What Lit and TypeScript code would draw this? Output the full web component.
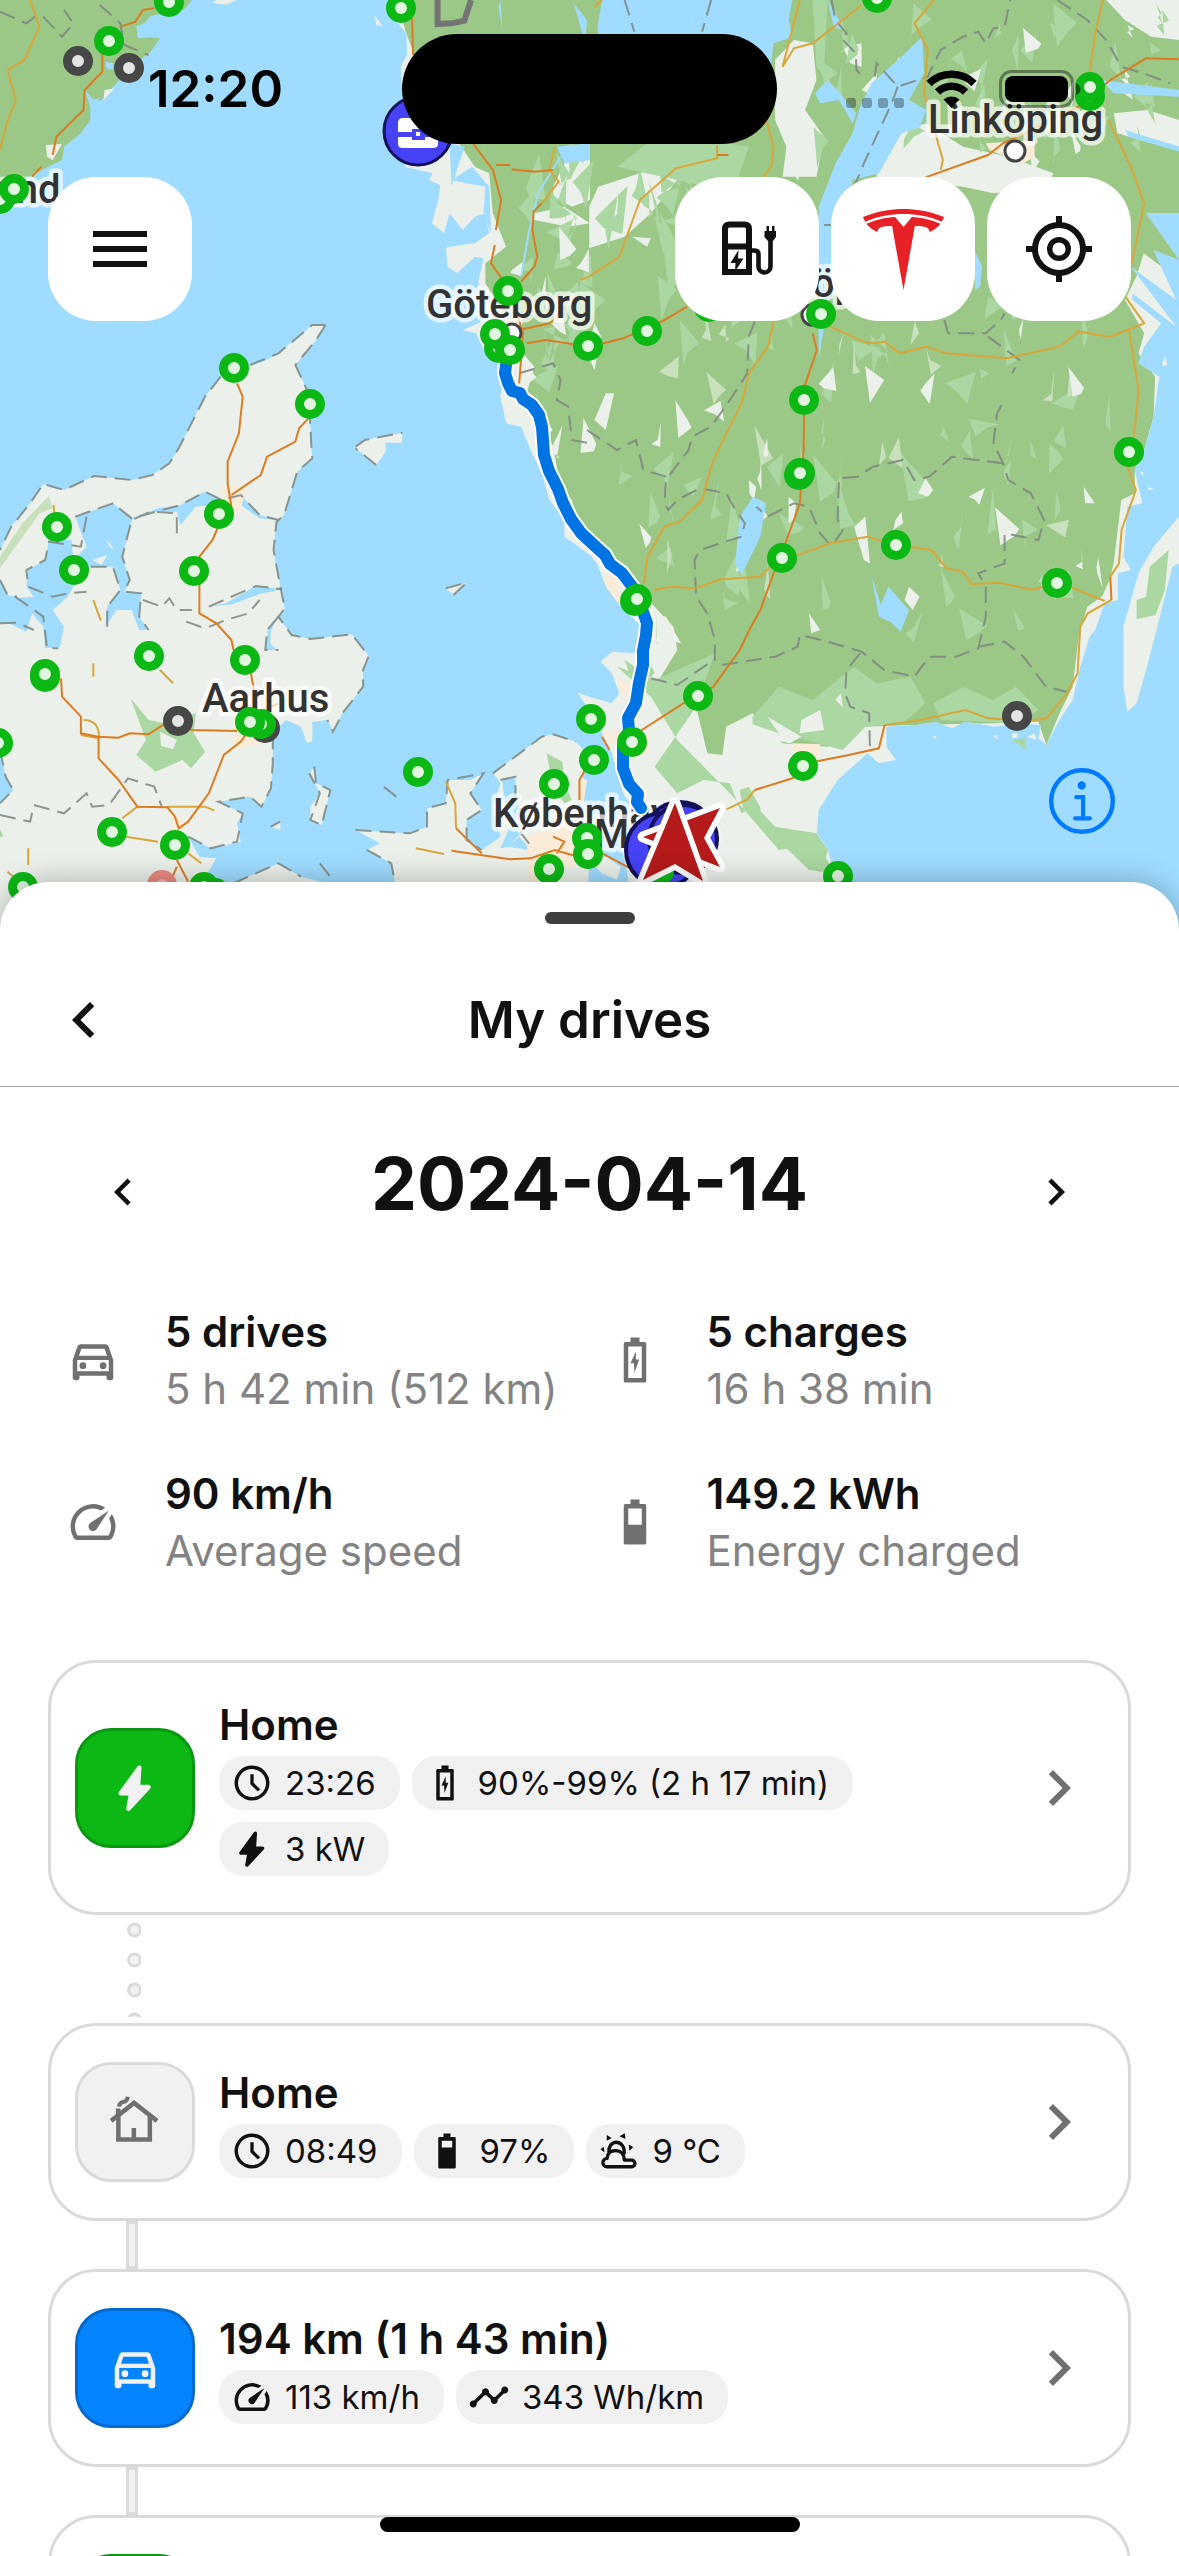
import { LitElement, html, css, svg, nothing } from "lit";
import type { SVGTemplateResult, TemplateResult } from "lit";
import { customElement } from "lit/decorators.js";
import { classMap } from "lit/directives/class-map.js";

/* ---------- icons (24 unit grid) ---------- */

const cell = "M10 2h4v2h2.3a.7.7 0 0 1 .7.7v16.6a.7.7 0 0 1-.7.7H7.7a.7.7 0 0 1-.7-.7V4.7a.7.7 0 0 1 .7-.7H10z";

const icons: Record<string, SVGTemplateResult> = {
  menu: svg`<path d="M3 6h18v2H3zM3 11h18v2H3zM3 16h18v2H3z"/>`,
  back: svg`<path d="M15.41 7.41 14 6l-6 6 6 6 1.41-1.41L10.83 12z"/>`,
  next: svg`<path d="M10 6 8.59 7.41 13.17 12l-4.58 4.59L10 18l6-6z"/>`,
  car: svg`<path fill-rule="evenodd" d="M18.92 6.01C18.72 5.42 18.16 5 17.5 5h-11c-.66 0-1.21.42-1.42 1.01L3 12v8c0 .55.45 1 1 1h1c.55 0 1-.45 1-1v-1h12v1c0 .55.45 1 1 1h1c.55 0 1-.45 1-1v-8zM6.85 7h10.29l1.08 3.11H5.77zM19 17H5v-5h14z"/><circle cx="7.5" cy="14.5" r="1.5"/><circle cx="16.5" cy="14.5" r="1.5"/>`,
  speed: svg`<path d="m20.38 8.57-1.23 1.85a8 8 0 0 1-.22 7.58H5.07A8 8 0 0 1 15.58 6.85l1.85-1.23A10 10 0 0 0 3.35 19a2 2 0 0 0 1.72 1h13.85a2 2 0 0 0 1.74-1 10 10 0 0 0-.27-10.44zm-9.79 6.84a2 2 0 0 0 2.83 0l5.66-8.49-8.49 5.66a2 2 0 0 0 0 2.83z"/>`,
  charging: svg`<path fill-rule="evenodd" d="${cell}M9 6v14h6V6z"/><path d="M12.4 8.2 10 13.4h1.5l.2 4.3 2.2-5.9h-1.5z"/>`,
  half: svg`<path fill-rule="evenodd" d="${cell}M9 6v7.2h6V6z"/>`,
  full: svg`<path fill-rule="evenodd" d="${cell}M9 6.2V10h6V6.2z"/>`,
  clock: svg`<path fill-rule="evenodd" d="M12 2a10 10 0 1 0 0 20 10 10 0 0 0 0-20zm0 18a8 8 0 1 1 0-16 8 8 0 0 1 0 16z"/><path fill="none" stroke="currentColor" stroke-width="1.9" d="M12 7v5.3l4 3.9"/>`,
  bolt: svg`<path stroke="currentColor" stroke-width="2" stroke-linejoin="round" d="m13.9 3-8.2 11.3h4.6L9.1 21.2 18 11.6h-4.7z"/>`,
  house: svg`<path fill="none" stroke="currentColor" stroke-width="2" d="m1.4 11.5 10.2-8 10.2 8M4.6 9.6v10.2h14V9.6M11.5 14.7v5M4.5 6v5"/><path fill="none" stroke="currentColor" stroke-width="1.8" d="M4.9 5.2c.1-1.5 1-2 2.2-2.2 1-.2 1.5-.8 1.7-2.2"/>`,
  weather: svg`<path fill="none" stroke="currentColor" stroke-width="1.9" stroke-linejoin="round" d="M5.2 21a2.4 2.4 0 0 1 0-4.8c.2-3.2 2.4-4.4 4.8-4.4 3 0 5 2.2 5 5.4h4.2a1.9 1.9 0 0 1 0 3.8zM6.4 13.5C5.6 9.5 8 7 10.5 7s5.2 2.6 4.3 7"/><path d="M5 2.8v3.4l2.8-1.7zM12.3 3.6l3-1.8.4 3.4zM17.5 8.2l2.6 1.7-2.2 2zM3.3 9.5l.4 3.4L1.4 11z"/>`,
  trend: svg`<path d="M23 8c0 1.1-.9 2-2 2-.18 0-.35-.02-.51-.07l-3.56 3.55c.05.16.07.34.07.52 0 1.1-.9 2-2 2s-2-.9-2-2c0-.18.02-.36.07-.52l-2.55-2.55c-.16.05-.34.07-.52.07s-.36-.02-.52-.07l-4.55 4.56c.05.16.07.33.07.51 0 1.1-.9 2-2 2s-2-.9-2-2 .9-2 2-2c.18 0 .35.02.51.07l4.56-4.55C8.02 9.36 8 9.18 8 9c0-1.1.9-2 2-2s2 .9 2 2c0 .18-.02.36-.07.52l2.55 2.55c.16-.05.34-.07.52-.07s.36.02.52.07l3.55-3.56C19.02 8.35 19 8.18 19 8c0-1.1.9-2 2-2s2 .9 2 2z"/>`,
  locate: svg`<circle cx="12" cy="12" r="8" fill="none" stroke="currentColor" stroke-width="2"/><circle cx="12" cy="12" r="3.1" fill="none" stroke="currentColor" stroke-width="1.8"/><path d="M11 1h2v3h-2zM11 20h2v3h-2zM1 11h3v2H1zM20 11h3v2h-3z"/>`,
  charger: svg`<g transform="scale(.3333)"><path fill="none" stroke="currentColor" stroke-width="6" d="M14 59V16q0-4.5 4.5-4.5h15q4.5 0 4.500 4.500v43zM14 33.500h24"/><path d="M27.500 37 19.500 50h5l-.5 8.500 8.500-13H27z"/><path fill="none" stroke="currentColor" stroke-width="4.6" d="M40 37.500h3.500q4 0 4 4v12a6 6 0 0 0 12 0V26"/><path d="M54 18h1.500v-5h2.500v5h3v-5h2.500v5H65v6l-3 4h-5l-3.500-4v-6z"/></g>`,
  tesla: svg`<path fill="#e82127" d="m12 5.362 2.475-3.026s4.245.09 8.471 2.054c-1.082 1.636-3.231 2.438-3.231 2.438-.146-1.439-1.154-1.79-4.354-1.79L12 24 8.619 5.034c-3.18 0-4.188.354-4.335 1.792 0 0-2.146-.795-3.229-2.43C5.28 2.431 9.525 2.34 9.525 2.34zM12 1.463c3.415-.03 7.326.528 11.328 2.28.535-.968.672-1.395.672-1.395C19.625.612 15.528.015 12 0 8.472.015 4.375.61 0 2.349c0 0 .195.525.672 1.396C4.674 1.989 8.585 1.435 12 1.46z"/>`,
  info: svg`<circle cx="12" cy="12" r="11.2" fill="none" stroke="currentColor" stroke-width="1.6"/><circle cx="11.9" cy="6.3" r="1.5"/><path fill="none" stroke="currentColor" stroke-width="1.5" stroke-linecap="round" d="M9.9 10.6h2.5v7.6M9.5 18.3h5.400"/>`,
};

const icon = (name: string, size = "") =>
  html`<svg class="icon ${size}" viewBox="0 0 24 24" aria-hidden="true">${icons[name]}</svg>`;

/* ---------- map data ---------- */

const green: [number, number][] = [
  [169, 2], [109, 41], [0, 199], [14, 189], [401, 8], [234, 368], [310, 404], [499, 348],
  [495, 334], [510, 350], [588, 346], [877, -2], [1090, 96], [1090, 87], [647, 331], [709, 307],
  [821, 314], [804, 400], [1129, 452], [57, 527], [74, 570], [219, 514], [194, 571], [149, 656],
  [245, 660], [45, 677], [45, 674], [261, 724], [250, 722], [-2, 743], [112, 832], [175, 845],
  [418, 772], [23, 887], [215, 893], [204, 887], [591, 719], [594, 760], [554, 784], [587, 838],
  [588, 854], [549, 869], [799, 475], [800, 473], [782, 558], [896, 545], [1057, 583],
  [635, 601], [637, 599], [698, 696], [632, 742], [803, 766], [838, 876], [508, 291],
];
const grey: [number, number][] = [[78, 61], [129, 68], [265, 728], [178, 721], [1017, 716]];

const labels: [number, number, string][] = [
  [-164, 203, "Kristiansand"],
  [426, 318, "Göteborg"],
  [928, 133, "Linköping"],
  [724, 297, "Jönköping"],
  [202, 712, "Aarhus"],
  [493, 827, "København"],
  [594, 848, "Malmö"],
];

const ring = ([x, y]: [number, number], stroke: string, fill: string) =>
  svg`<circle cx=${x} cy=${y} r="10.5" fill=${fill} stroke=${stroke} stroke-width="9"/>`;

// Small woodland and clearing fragments scattered over the Swedish inland.
const shards = (seed: number, count: number, x0: number, y0: number, w: number, h: number, size = 1) => {
  let s = seed;
  const next = () => ((s = (s * 16807) % 2147483647) / 2147483647);
  const near = (span: number) => Math.round((next() - 0.5) * span * size);
  for (let i = 0; i < 8; i++) next();
  let d = "";
  for (let i = 0; i < count; i++) {
    const x = Math.round(x0 + next() * w);
    const y = Math.round(y0 + next() * h);
    const tall = Math.round((40 + next() * 80) * size);
    d += `M${x} ${y}l${near(40)} ${tall}l${near(70)} ${-Math.round(tall * next() * 0.5)}l${near(60)} ${-Math.round(tall * 0.2)}z`;
  }
  return d;
};

const sweden =
  "M1040 0 1050 60 1080 100 1082 165 1065 200 1068 260 1110 400 1075 500 1150 520 1140 540 1170 555 1165 600 1148 670 1180 700 1195 640 1230 690 1262 650 1290 640 1300 700 1262 730 1185 742 1190 800 1215 820 1262 770 1285 775 1272 840 1270 900 1290 960 1230 990 1265 1000 1290 1060 1330 1060 1340 1130 1330 1190 1345 1270 1385 1280 1410 1350 1440 1420 1460 1500 1500 1560 1500 1610 1568 1665 1586 1690 1611 1760 1646 1815 1706 1880 1696 1960 1626 1955 1596 1985 1626 2020 1646 2080 1626 2110 1566 2090 1536 2078 1560 2120 1596 2190 1626 2260 1656 2380 1686 2430 1646 2520 1666 2610 1690 2790 2240 2790 2226 2670 2201 2550 2171 2500 2176 2430 2226 2340 2306 2260 2336 2290 2381 2280 2356 2240 2356 2180 2436 2175 2486 2165 2530 2185 2566 2165 2646 2180 2700 2170 2766 2175 2760 2215 2781 2235 2816 2160 2851 2100 2871 2000 2896 1910 2911 1890 2936 1810 2971 1800 2971 1720 3006 1710 2986 1670 2996 1520 3036 1510 3016 1410 3041 1350 3066 1250 3081 1130 3026 1090 3041 1040 3086 970 3010 900 3010 880 3126 980 3006 800 3126 900 3066 750 3134 780 3046 640 3134 640V0z";

const forest =
  "M1055 0 1078 95 1100 160 1220 430 1262 500 1300 520 1310 640 1345 740 1290 790 1290 850 1350 960 1390 1060 1420 1100 1400 1180 1440 1260 1470 1340 1490 1460 1520 1500 1540 1580 1568 1640 1600 1650 1690 1750 1740 1820 1790 1880 1800 1950 1740 2060 1850 2120 1880 2260 1920 2265 1930 2180 2000 2140 2080 2230 2200 2240 2290 2180 2430 2175 2640 2170 2760 2165 2781 2235 2816 2140 2851 2060 2868 1900 2890 1820 2940 1780 2960 1690 2980 1500 3016 1480 3016 1410 3041 1350 3066 1250 3070 1130 3026 1060 3041 1000 2990 900 3020 830 3040 760 3134 840V0z";

const coastDk =
  "M865 975 830 975 740 1060 700 1085 665 1095 590 1125 545 1190 475 1345 450 1390 405 1425 350 1440 250 1428 170 1470 115 1452 80 1510 30 1580 0 1650 0 1740 20 1785 45 1790 85 1840 70 1895 20 1868 0 1870 0 2250 15 2330 35 2370 0 2410V2790H540V2640L575 2575 530 2570 500 2510 560 2545 640 2525 630 2470 645 2440 580 2405 665 2390 695 2420 720 2365 725 2290 725 2200 760 2160 800 2180 815 2230 830 2210 830 2165 870 2160 885 2195 910 2140 965 2060 965 2010 980 1968 935 1903 825 1917 775 1905 740 1850 757 1825 745 1760 727 1650 735 1565 755 1545 790 1415 830 1375 828 1345 820 1180 785 1095 840 1020z";

const route =
  "M506 365l-1 8 3 10 4 8 8 2 3 6 9 6 7 10 3 12 2 28 5 16 9 18 5 14 8 16 10 14 14 13 10 9 5 9 12 9 12 16 6 12 2 8 5 14-1 12-3 16 0 14-4 18-3 20-8 15 1 12-6 16v22l6 16 9 10-1 8 4 6";

@customElement("drive-map")
export class DriveMap extends LitElement {
  static styles = css`
    :host { display: block; overflow: hidden; background: #a0dcff; }
    .canvas { display: block; width: 100%; height: 100%; }
    .terrain path { vector-effect: non-scaling-stroke; }
    .city {
      font: 500 40px Roboto, "Liberation Sans", sans-serif;
      fill: #333;
      stroke: rgba(255, 255, 255, 0.7);
      stroke-width: 9px;
      stroke-linejoin: round;
      paint-order: stroke;
    }
    .main { fill: none; stroke: #dc7c22; stroke-width: 2px; }
    .minor { fill: none; stroke: #d9a63a; stroke-width: 2px; }
    .border { fill: none; stroke: #7d8780; stroke-width: 2px; stroke-dasharray: 16 8; opacity: 0.85; }
    .land { fill: #ebf0ea; }
    .wood { fill: #9bc787; }
    .grove { fill: #abd7a2; }
    .pale { fill: #c8e0bc; }
    .water { fill: #a0dcff; }
    .urban { fill: #faecd8; }
  `;

  render() {
    return html`<svg class="canvas" viewBox="0 0 1179 930" preserveAspectRatio="xMidYMin slice" role="img" aria-label="Map of southern Sweden and Denmark">
      <defs><clipPath id="inland"><path d=${sweden} /></clipPath></defs>
      <g class="terrain" transform="scale(.37625 .33333)">
        ${this.land()} ${this.roads()}
      </g>
      ${this.overlay()}
    </svg>`;
  }

  private land() {
    return svg`
      <path class="land" d=${sweden}/>
      <path class="wood" d="M0 0H510L490 28 455 35 400 48 385 68 362 80 368 115 400 112 425 115 400 155 345 205 270 300 240 305 240 360 215 400 170 440 165 480 120 505 80 530 40 545 0 560z"/>
      <path class="land" d="M565 8 600 14 630 0H575zM278 270 305 265 275 300zM122 435 165 432 140 480 125 470zM995 45 1018 80 1000 75z"/>
      <path class="water" d="M365 75 385 95 420 70 440 65 395 110 365 110zM280 185 300 190 300 210 282 205zM225 270 250 300 270 290 240 320z"/>
      <g clip-path="url(#inland)">
        <path class="wood" d=${forest}/>
        <path class="grove" d="M1640 2000 1740 2040 1900 1960 1850 2120 1740 2300 1800 2380 1870 2340 1940 2350 1970 2440 2010 2420 2060 2480 2170 2500 2201 2550 2180 2620 2130 2540 2070 2550 1940 2380 1800 2220 1730 2090zM2000 2150 2070 2060 2160 2100 2270 2000 2330 2050 2420 2030 2460 2110 2400 2170 2300 2180 2240 2250 2000 2180zM2480 2110 2560 2060 2640 2100 2700 2060 2760 2130 2700 2170 2500 2160z"/>
        <path class="grove" d="M1990 2360 2020 2420 2030 2500 1998 2440 1976 2430 1966 2370zM2050 2500 2100 2530 2160 2510 2220 2620 2150 2610zM1660 1980 1700 2010 1720 1970 1740 2020 1690 2070z"/>
        <path class="land" d="M1566 620 1590 560 1700 520 1800 490 1850 500 1800 540 1730 640 1660 710 1566 745zM2060 180 2110 120 2160 130 2170 240 2140 330 2190 410 2170 530 2080 530 2090 440 2060 360zM2330 480 2400 400 2460 370 2560 440 2680 470 2800 520 2780 560 2640 580 2560 560 2460 550 2400 530 2330 560zM2940 0H3134V120L3060 110 2990 60zM2240 140 2290 130 2290 200 2260 190zM1470 560 1500 490 1568 460V600L1520 620 1470 590zM1420 640 1500 620 1568 670 1510 680 1420 660zM2960 340 3050 330 3134 360V440L3060 430 2970 400zM2290 270 2330 220 2330 290zM2380 600 2450 560 2440 610z"/>
        <path class="land" d="M1700 1830 1770 1850 1810 1930 1730 1910zM1998 2172 2070 2200 2040 2150 2130 2210 2100 2230 1998 2205zM2130 2160 2180 2130 2190 2190 2125 2200zM2220 2100 2235 2080 2240 2120zM2890 1820 2940 1800 2900 1900 2880 1900zM2940 1760 2966 1710 2970 1800 2930 1790zM1610 1180 1580 1260 1610 1290 1632 1180zM1580 970 1598 1010 1580 1110 1560 1060zM1680 710 1730 715 1720 740z"/>
        <path class="grove" d=${shards(7, 40, 1640, 560, 1360, 780, 1.2)}/>
        <path class="grove" d=${shards(2311, 30, 1620, 1340, 1250, 520, 1.3)}/>
        <path class="grove" d=${shards(911, 26, 1360, 380, 220, 900, 1.3)}/>
        <path class="grove" d=${shards(577, 36, 2150, 0, 950, 400, 1.1)}/>
        <path class="grove" d=${shards(4099, 22, 1640, 440, 460, 240, 1.5)}/>
        <path class="pale" d=${shards(333, 20, 1600, 900, 1350, 860)}/>
        <path class="land" d=${shards(1187, 18, 1600, 900, 1350, 860)}/>
        <path class="land" d=${shards(773, 12, 1320, 600, 260, 800)}/>
        <path class="land" d=${shards(2903, 16, 1600, 60, 1400, 420)}/>
        <path class="land" d="M2270 1580 2300 1550 2312 1690 2296 1680zM2380 1560 2396 1535 2400 1570 2374 1590zM2460 1435 2480 1470 2466 1490 2440 1480zM2150 1840 2180 1890 2156 1900zM2416 1760 2444 1790 2426 1830 2404 1800zM1990 1440 2010 1460 2004 1500 1992 1480zM2096 1490 2116 1510 2110 1560 2096 1570zM2880 1460 2910 1510 2884 1510z"/>
        <path class="grove" d="M1640 500 1720 430 1790 400 1850 330 1880 420 1990 440 1960 540 1880 560zM2160 0H2200L2190 200 2210 260 2170 200zM1790 10 1810 0 1826 45 1806 70z"/>
        <path class="urban" d="M1350 960 1390 950 1385 1010 1350 1020zM2620 430 2750 420 2750 470 2720 490 2630 450zM1604 1730 1640 1720 1650 1810 1616 1800zM2104 2230 2180 2232 2180 2270 2110 2280zM1640 2040 1680 2050 1680 2090 1650 2080zM1596 2200 1640 2190 1640 2240zM1700 2220 1726 2200 1726 2260 1710 2265z"/>
        <path class="water" d="M1600 0H2106L2096 60 2106 112 2056 130 2050 190H1600L1588 80zM2200 0 2230 60 2240 90 2215 80zM2451 110 2396 170 2316 250 2286 320 2266 400 2221 490 2176 620 2176 1080 2216 800 2266 540 2336 520 2396 400 2446 380 2461 330 2416 300 2456 220zM2166 280 2200 240 2240 290 2276 340 2266 370 2230 300 2180 310zM2926 240 3134 270 3134 290 2960 280zM2990 390 3134 440 3134 455 3000 410zM2001 1490 2036 1510 2021 1610 1971 1725 1954 1690 1966 1550zM2316 1725 2341 1815 2361 1760 2416 1830 2394 1895 2366 1865 2336 1850zM2590 750 2610 800 2605 860 2592 870zM1330 0 1335 90 1325 20zM1525 10 1560 60 1555 130zM1195 430 1235 440 1200 560zM1200 540 1255 500 1300 560 1305 700 1285 640 1290 560 1240 550zM1480 440 1568 430V480L1500 490z"/>
      </g>
      <path d="M1490 470 1430 580 1405 700 1385 830" fill="none" stroke="#a0dcff" stroke-width="2"/>
      <path class="land" d="M3134 1550 3066 1640 3026 1720 2986 1880 2986 2060 2996 2135 3021 2110 3046 2010 3076 1880 3096 1790 3116 1700 3134 1690zM2640 2210l10-6 2 12zM2690 2200h14v14h-14zM2480 2208h8v6h-8zM2730 2210l20-10 4 20zM3030 1415l10 4-4 10zM3050 1460l16 6-12 4zM3090 1085l8-16 4 26-12 4z"/>
      <path class="grove" d="M3106 1650 3056 1700 3046 1790 3021 1800 3021 1858 3071 1845 3096 1770zM2690 2220 2726 2215 2726 2250z"/>
      <path class="land" d=${coastDk}/>
      <path class="water" d="M200 1550 300 1510 350 1555 420 1525 480 1515 545 1475 590 1500 640 1485 690 1545 740 1560 690 1555 640 1515 590 1512 520 1520 480 1575 470 1535 400 1535 350 1560 325 1670 345 1740 330 1775 375 1780 370 1850 395 1890 370 1890 350 1830 310 1830 280 1880 285 1820 320 1770 300 1700 240 1700 200 1750 180 1790 140 1830 170 1880 160 1940 120 1945 115 1880 85 1840 40 1795 90 1790 70 1760 75 1710 120 1680 130 1620 190 1620 195 1680 230 1640zM555 1820 600 1810 680 1758 750 1768 690 1782 620 1812zM742 1848 712 1890 705 1950 735 1950 718 1930 720 1890z"/>
      <path class="land" d="M245 1680 285 1665 270 1695zM285 1620 305 1650 290 1640z"/>
      <path class="pale" d="M130 1488 140 1525 105 1540 0 1705V1670L60 1570z"/>
      <path class="grove" d="M347 2095 395 2160 440 2170 520 2140 515 2200 545 2255 508 2305 485 2280 413 2315 362 2265 388 2220z"/>
      <path class="land" d="M425 2195 470 2220 460 2248 428 2238z"/>
      <path class="urban" d="M585 1455 655 1460 640 1530 610 1540zM630 2060 700 2090 740 2120 720 2220 620 2250 620 2180zM455 2440 490 2460 480 2520 455 2510z"/>
      <path class="land" d="M835 2300 840 2350 878 2370 855 2475 825 2460 825 2420 850 2380 822 2320zM805 2190 830 2180 830 2225 818 2228zM1185 1765 1240 1748 1205 1785zM945 1340 970 1320 1070 1298 1068 1328 1025 1328 1025 1355 1000 1395 945 1345zM720 2480 745 2465 745 2490zM620 2650 740 2590 800 2630 870 2650V2790H600zM1535 2080 1568 2110 1568 2130z"/>
      <path class="land" d="M1310 2320 1440 2210 1470 2203 1530 2225 1560 2260 1546 2340 1535 2420 1560 2480 1570 2540 1650 2600 1640 2640 1600 2620 1566 2580 1560 2790H1050V2650L1040 2590 975 2550 1010 2530 945 2490 1090 2500 1135 2480 1135 2425 1185 2410 1190 2340 1250 2340 1285 2320 1250 2380 1280 2430 1240 2460 1240 2520 1280 2550 1330 2510 1310 2420 1330 2350z"/>
      <path class="water" d="M1335 2340 1370 2330 1370 2400 1395 2450 1385 2500 1350 2540 1330 2545 1355 2480 1340 2400zM1350 2540 1410 2550 1380 2510z"/>
      <path class="grove" d="M1453 2260 1495 2285 1500 2350 1520 2400 1500 2410 1470 2360zM0 2490 10 2510H0z"/>
      <path class="urban" d="M1400 2510 1450 2490 1520 2460 1560 2500 1570 2560 1520 2600 1460 2600 1430 2700 1405 2640zM1540 2330 1560 2340 1550 2420 1535 2400z"/>`;
  }

  private roads() {
    return svg`
      <path class="border" d="M865 975 830 975 740 1060 665 1095 590 1125 545 1190 475 1345 450 1390 405 1425 350 1440 250 1428 170 1470 115 1452 80 1510 30 1580 0 1650M0 1740 20 1785 45 1790M865 975 840 1020 785 1095 820 1180 828 1345 830 1375 790 1415 755 1545 735 1565 727 1650 745 1760 757 1825 740 1850 775 1905 825 1917 935 1903 980 1968 965 2010 965 2060 910 2140 885 2195 870 2160M725 2200 725 2290 720 2365 695 2420 665 2390 580 2405 645 2440 630 2525 560 2545 500 2510M0 2250 15 2330 35 2370 0 2410"/>
      <path class="border" d="M200 1550 300 1510 350 1555 480 1515 545 1475 590 1500 640 1485 690 1545 740 1560M470 1600V1540L400 1535 350 1560 325 1670 345 1740 330 1775 375 1780 370 1850 395 1890M230 1550 215 1640 130 1625 120 1680 70 1710 75 1760 140 1790 180 1780 230 1775M40 1790 115 1850 125 1945 155 1945M285 1880 285 1820 320 1770 300 1700 240 1700M0 1870 45 1868 90 1890M555 1820 680 1758 750 1768M740 1850 710 1890 705 1950 740 1950M380 1800 430 1820 450 1795 470 1830 510 1830M495 1865 545 1885 600 1860 660 1840 690 1800M0 2445 80 2465 90 2415 170 2440 230 2380 245 2420 290 2415 340 2335 410 2360 430 2420"/>
      <path class="border" d="M1310 2320 1440 2210 1470 2203 1530 2225M945 2490 1090 2500 1135 2480 1135 2425 1185 2410 1190 2340 1285 2320 1250 2380 1280 2430 1240 2460 1240 2520 1280 2550M975 2550 1040 2590 1050 2650M1330 2340 1370 2330 1370 2400 1395 2450 1385 2500 1420 2550M835 2300 840 2350 878 2370 855 2475 825 2460 850 2380 822 2320M1185 1765 1240 1748 1205 1785M945 1340 970 1320 1070 1298M1000 1395 945 1345M1020 2360 1070 2405M720 2480 745 2465M620 2650 740 2590 800 2630M850 2590 885 2640"/>
      <path class="border" d="M0 35 70 70 110 35M115 50 165 110 195 70 170 30M265 15 320 70 330 135 395 165M1660 0 1686 95M1890 0 1866 95M2210 0 2220 60 2250 100 2236 115 2275 160 2276 210 2300 240M2325 230 2330 190 2386 260 2466 230 2500 150 2560 110 2600 95 2620 130 2640 85 2670 80 2685 0M2386 260 2370 310 2300 480 2270 560M2810 0 2890 60 2940 120 2980 200 3040 220 3110 250"/>
      <path class="border" d="M2006 965 1990 1010 1986 1120 1940 1200 1890 1280 1840 1310 1830 1350 1770 1440 1766 1510 1776 1530 1800 1500 1860 1465 1930 1480 1950 1520 1980 1570 1970 1610 1860 1650 1846 1680 1850 1790 1880 1840 1900 1920 1900 1980 1920 1995 2060 1970 2120 1940 2126 1905 2200 1925 2290 1955 2350 2010 2430 2030 2470 1970 2540 1970 2600 1945 2620 1850 2620 1760 2600 1720 2670 1690 2670 1600 2760 1620 2775 1560 2740 1480 2680 1440 2666 1390 2640 1330 2650 1240 2670 1200M2666 1390 2530 1370 2470 1430 2430 1440 2400 1380 2320 1400 2280 1430 2230 1435 2226 1560 2240 1590 2210 1640 2180 1600 2150 1520 2110 1510 2040 1550 2010 1520M1560 1290 1640 1350 1690 1320 1710 1410 1770 1430M2286 1960 2250 2010 2246 2080 2260 2120 2310 2140 2312 2240M2600 1940 2670 1925 2720 1970 2780 2060 2850 2080M1730 2035 1800 2055 1890 1985M2510 960 2520 1000 2620 1000 2660 960 2670 940M2626 1010 2710 1080 2690 1120M2190 675H2215M1380 1120 1470 1090 1490 1140 1480 1200 1510 1220 1520 1320 1568 1330"/>
      <path class="minor" d="M80 0 105 80 65 180 20 210 42 300 18 370 0 450M1475 440 1460 510 1485 545 1440 610M1540 840 1568 830M1566 830 1646 770 1701 600 1796 505 1906 475V435M1580 20 1600 0M2126 0 2080 200 2110 145 2160 130 2290 15M2036 360 2056 440 2050 500 2030 530M2481 0 2431 70 2466 150 2456 280 2506 480 2500 510M2931 0 2911 100 2896 220M2946 360 3006 500 3041 610 3006 800M2056 965 2041 1040 1991 1120 1971 1210 1911 1345 1890 1400 1866 1500 1806 1565 1766 1580 1721 1670 1711 1750M2206 980 2306 1030 2351 1025 2391 1060 2461 1040 2516 1060 2676 1075 2816 1040 2866 995 2951 1010 2996 990 3041 970 2991 890M3001 990 3026 1170 3014 1310M2996 1400 3019 1470 2981 1590 2974 1690 2951 1730M2954 1800 2891 1840 2871 1880 2864 2020 2836 2080 2781 2155 2736 2162 2626 2155 2566 2130 2446 2160 2351 2175M1736 1770 1786 1760 1846 1765 1916 1738 2021 1730 2056 1690 2146 1655 2206 1630 2306 1610 2381 1635 2476 1650 2516 1705 2561 1717 2581 1752 2656 1748 2746 1770 2811 1745 2936 1803M2006 2370 1986 2398 1931 2428M142 1515 145 1540M248 1800 268 1862M425 2010 460 2050M248 1990V2030M365 2420 325 2455M335 2510 420 2525M445 2420 545 2420 570 2432M222 2160Q265 2160 263 2215L215 2205M1185 2345 1210 2410 1212 2485M1105 2545 1180 2562M500 2560 535 2590M75 2545V2595M20 2615 45 2640"/>
      <path class="main" d="M410 25 380 30 360 65 320 80M272 160 272 215 225 270 222 330 150 410 140 465M110 500 85 530M1095 55 1098 165M1258 432 1310 510 1332 600 1318 690M1470 510 1420 515 1360 508M1355 495 1318 495M1440 610 1418 635 1415 690 1428 770 1420 800 1385 845M1315 735 1305 790 1355 870 1390 1000 1380 1150M1380 990 1460 970 1500 920M1400 1030 1450 1020 1568 1040 1656 1015 1766 960 1826 920M1906 465H1936M2160 1000 2171 1050 2138 1160 2136 1345 2126 1510 2081 1650 2056 1720 2021 1830 1996 1880 1966 1950 1896 2060 1816 2110 1706 2190 1676 2220M2460 532 2626 465 2666 430 2866 320 2951 240 3046 175 3134 178M2351 2175 2336 2245 2256 2265 2166 2285 2106 2335 2006 2370M2951 1730 2954 1800M630 1150 645 1190 635 1300 605 1385 605 1450 615 1520M820 1255 795 1285 785 1325 710 1370 693 1425 615 1485M578 1585 565 1620 530 1670 530 1840 575 1870 615 1920 625 1970M667 2020 675 2070M162 2035 165 2090 215 2150 215 2200 260 2210 315 2213 345 2200 395 2203 440 2170 510 2190 630 2193M262 2210 262 2275 315 2340 365 2420 445 2422 465 2450 475 2485 500 2465 555 2380 595 2265 640 2225 700 2130 740 2110M470 2580 500 2645M470 2600 455 2640M1212 2485 1280 2560M1200 2552 1355 2578 1410 2575 1475 2550 1520 2565 1600 2560 1700 2620 1780 2640M1470 2510 1500 2525 1480 2560M1540 2400V2340L1560 2300M1620 2250 1600 2210"/>
      <path d="M1163 0V72L1200 70 1234 62 1252 0" fill="none" stroke="#747474" stroke-width="6"/>`;
  }

  private overlay() {
    return svg`
      ${labels.map(([x, y, name]) => svg`<text class="city" x=${x} y=${y}>${name}</text>`)}
      <g fill="#fff" stroke="#444" stroke-width="3">
        <circle cx="1015" cy="151" r="10"/><circle cx="512" cy="333" r="9"/><circle cx="812" cy="315" r="10"/>
      </g>
      <g fill="none" stroke-linejoin="round" stroke-linecap="round">
        <path stroke="#fff" stroke-width="16" d=${route}/>
        <path stroke="#0074e2" stroke-width="12" d=${route}/>
      </g>
      <circle cx="162" cy="885" r="10.5" fill="#f5b3ab" stroke="#e98a80" stroke-width="9"/>
      ${grey.map((p) => ring(p, "#474747", "#e4e4e4"))}
      ${green.map((p) => ring(p, "#0cb814", "#e2f5e0"))}
      <circle cx="418" cy="131" r="34" fill="#4543f5" stroke="#13105c" stroke-width="3"/>
      <path fill="#fff" d="M398 132v-9q0-5 5-5h30q5 0 5 5v9h-13v-3h-13v3zM398 137h14v3h13v-3h13v7q0 4-5 4h-30q-5 0-5-4zM416 132h4v4h-4z"/>
      <g fill="#4543f5" stroke="#13105c" stroke-width="4">
        <circle cx="680" cy="838" r="36"/><circle cx="663" cy="850" r="37"/><circle cx="683" cy="839" r="34"/>
      </g>
      <circle cx="662" cy="872" r="12" fill="#0cb814"/>
      <g fill="#b51b1b" stroke="#fff" stroke-width="11" stroke-linejoin="round" paint-order="stroke">
        <path d="M643 837 720 808 704 838 720 867z"/>
        <path d="M675 803 643 880 675 864 703 881z"/>
      </g>`;
  }
}

/* ---------- screen ---------- */

interface Stat { icon: string; title: string; detail: string }
interface Chip { icon: string; text: string }
interface Stop { kind: "charge" | "place" | "drive"; icon: string; title: string; chips: Chip[]; link: "dots" | "line" | "" }

const stats: Stat[] = [
  { icon: "car", title: "5 drives", detail: "5 h 42 min (512 km)" },
  { icon: "charging", title: "5 charges", detail: "16 h 38 min" },
  { icon: "speed", title: "90 km/h", detail: "Average speed" },
  { icon: "half", title: "149.2 kWh", detail: "Energy charged" },
];

const stops: Stop[] = [
  {
    kind: "charge", icon: "bolt", title: "Home", link: "dots",
    chips: [
      { icon: "clock", text: "23:26" },
      { icon: "charging", text: "90%-99% (2 h 17 min)" },
      { icon: "bolt", text: "3 kW" },
    ],
  },
  {
    kind: "place", icon: "house", title: "Home", link: "line",
    chips: [
      { icon: "clock", text: "08:49" },
      { icon: "full", text: "97%" },
      { icon: "weather", text: "9 °C" },
    ],
  },
  {
    kind: "drive", icon: "car", title: "194 km (1 h 43 min)", link: "line",
    chips: [
      { icon: "speed", text: "113 km/h" },
      { icon: "trend", text: "343 Wh/km" },
    ],
  },
  { kind: "charge", icon: "bolt", title: "", link: "", chips: [] },
];

@customElement("app-root")
export class AppRoot extends LitElement {
  static styles = css`
    :host {
      display: block;
      font-family: Inter, "Liberation Sans", sans-serif;
      color: #111;
    }
    * { box-sizing: border-box; }
    button { border: 0; padding: 0; background: none; color: inherit; font: inherit; cursor: pointer; }
    h1, h2, h3, ul, ol { margin: 0; padding: 0; list-style: none; font-weight: inherit; }

    .screen { position: relative; display: flex; flex-direction: column; height: 100vh; overflow: hidden; background: #fff; }
    .icon { display: block; flex: none; width: 54px; height: 54px; fill: currentColor; overflow: visible; }
    .icon.small { width: 42px; height: 42px; }
    .icon.large { width: 72px; height: 72px; }
    .icon.logo { width: 81px; height: 81px; }
    .icon.badge { width: 66px; height: 66px; }

    .top { display: grid; flex: none; height: 930px; }
    .top > * { grid-area: 1 / 1; min-width: 0; min-height: 0; }
    .controls { display: flex; flex-direction: column; z-index: 1; padding-bottom: 96px; }

    .status { display: grid; grid-template-columns: 1fr 375px 1fr; align-items: center; padding-top: 34px; color: #000; }
    .clock { padding-left: 148px; font-size: 51px; line-height: 60px; font-weight: 600; }
    .island { height: 110px; border-radius: 55px; background: #000; }
    .signals { display: flex; justify-content: flex-end; align-items: flex-end; gap: 22px; padding-right: 98px; }
    .signals svg { display: block; }

    .tools { display: flex; gap: 12px; padding: 33px 48px 0; }
    .tool { display: grid; place-items: center; width: 144px; height: 144px; border-radius: 48px; background: #fff; }
    .tool.first { margin-right: auto; }
    .info { margin: auto 64px 0 auto; color: #007aff; }

    .sheet {
      position: relative; z-index: 2; display: flex; flex-direction: column; flex: 1 0 auto;
      margin-top: -48px; padding-top: 30px; border-radius: 48px 48px 0 0; background: #fff;
      box-shadow: 0 0 30px rgba(0, 0, 0, 0.28);
    }
    .handle { align-self: center; width: 90px; height: 12px; border-radius: 6px; background: #3f3f3f; }
    .head {
      display: grid; grid-template-columns: 72px 1fr 72px; align-items: center; height: 133px;
      margin-top: 30px; padding: 0 48px; border-bottom: 1px solid #a6a6a6;
    }
    .title { font-size: 51px; line-height: 60px; font-weight: 600; text-align: center; }
    .day { display: grid; grid-template-columns: 54px 1fr 54px; align-items: center; padding: 55px 96px 80px; }
    .day button { padding-top: 16px; }
    .date { font-size: 73px; line-height: 84px; font-weight: 700; text-align: center; }

    .stats { display: grid; grid-template-columns: 1fr 1fr; row-gap: 54px; padding: 0 48px 84px; color: #707070; }
    .stat { display: flex; align-items: center; gap: 45px; padding-left: 18px; }
    .lines { display: flex; flex-direction: column; gap: 6px; font-size: 42px; line-height: 51px; white-space: nowrap; }
    .name { color: #111; font-size: 42px; line-height: 51px; font-weight: 600; }
    .detail { color: #838383; }

    .trip { padding: 0 48px; }
    .card {
      display: flex; align-items: center; gap: 24px; min-height: 198px; padding: 36px 33px 36px 24px;
      border: 3px solid #dadada; border-radius: 48px; color: inherit; text-decoration: none;
    }
    .card > .next { margin-left: auto; color: #707070; }
    .tile { display: grid; place-items: center; flex: none; width: 120px; height: 120px; border: 3px solid #dadada; border-radius: 36px; background: #f1f1f1; color: #707070; }
    .tile.charge { border-color: #0a9711; background: #0cb814; color: #f1f1f1; }
    .tile.drive { border-color: #0469cc; background: #0584ff; color: #f1f1f1; }
    .body { display: flex; flex-direction: column; gap: 6px; }
    .chips { display: flex; flex-wrap: wrap; gap: 12px; }
    .chip { display: flex; align-items: center; gap: 12px; height: 54px; padding: 0 24px 0 12px; border-radius: 24px; background: #f1f1f1; font-size: 33px; line-height: 42px; white-space: nowrap; }
    .line { width: 12px; height: 48px; margin-left: 78px; border: 3px solid #dadada; background: #f1f1f1; }
    .dots { display: block; width: 14px; height: 96px; margin: 6px 0 6px 79px; overflow: hidden; }
    .dots circle { fill: #f1f1f1; stroke: #dadada; stroke-width: 3px; }

    .home-bar { position: absolute; z-index: 3; left: 50%; bottom: 24px; width: 420px; height: 15px; margin-left: -210px; border-radius: 8px; background: #000; }
  `;

  render() {
    return html`
      <main class="screen">
        <section class="top">
          <drive-map></drive-map>
          <div class="controls">${this.statusBar()} ${this.toolbar()}</div>
        </section>
        <section class="sheet">
          <div class="handle"></div>
          <header class="head">
            <button aria-label="Back">${icon("back", "large")}</button>
            <h1 class="title">My drives</h1>
          </header>
          <div class="day">
            <button aria-label="Previous day">${icon("back")}</button>
            <h2 class="date">2024-04-14</h2>
            <button aria-label="Next day">${icon("next")}</button>
          </div>
          <ul class="stats">${stats.map((s) => this.stat(s))}</ul>
          <ol class="trip">${stops.map((s) => this.stop(s))}</ol>
        </section>
        <div class="home-bar"></div>
      </main>`;
  }

  private statusBar(): TemplateResult {
    return html`<div class="status">
      <span class="clock">12:20</span>
      <div class="island"></div>
      <div class="signals">
        <svg width="58" height="10" viewBox="0 0 58 10" opacity=".3" aria-hidden="true">
          ${[0, 16, 32, 48].map((x) => svg`<rect x=${x} width="10" height="10" rx="3"/>`)}
        </svg>
        <svg width="51" height="38" viewBox="0 0 51 38" aria-hidden="true">
          <path fill="none" stroke="#000" stroke-width="7.5" d="M3 13.5a32 32 0 0 1 45 0M11.5 22a20 20 0 0 1 28 0" />
          <path d="M17.5 29.5a12 12 0 0 1 16 0L25.5 38z" />
        </svg>
        <svg width="82" height="38" viewBox="0 0 82 38" aria-hidden="true">
          <rect x="1.5" y="1.5" width="72" height="35" rx="11" fill="none" stroke="#000" stroke-opacity=".4" stroke-width="3" />
          <rect x="6" y="6" width="63" height="26" rx="8" />
          <path d="M77 13q4.5 2 4.5 6t-4.5 6z" fill-opacity=".5" />
        </svg>
      </div>
    </div>`;
  }

  private toolbar(): TemplateResult {
    return html`<nav class="tools">
        <button class="tool first" aria-label="Menu">${icon("menu", "large")}</button>
        <button class="tool" aria-label="Chargers">${icon("charger", "large")}</button>
        <button class="tool" aria-label="Car">${icon("tesla", "logo")}</button>
        <button class="tool" aria-label="Locate">${icon("locate", "large")}</button>
      </nav>
      <button class="info" aria-label="Map information">${icon("info", "badge")}</button>`;
  }

  private stat(s: Stat): TemplateResult {
    return html`<li class="stat">
      ${icon(s.icon)}
      <div class="lines"><span class="name">${s.title}</span><span class="detail">${s.detail}</span></div>
    </li>`;
  }

  private stop(s: Stop): TemplateResult {
    return html`<li>
      <a class="card" href="#">
        <span class=${classMap({ tile: true, [s.kind]: true })}>${icon(s.icon)}</span>
        <div class="body">
          <h3 class="name">${s.title}</h3>
          <div class="chips">
            ${s.chips.map((c) => html`<span class="chip">${icon(c.icon, "small")}${c.text}</span>`)}
          </div>
        </div>
        <span class="next">${icon("next", "large")}</span>
      </a>
      ${s.link === "line" ? html`<div class="line"></div>` : nothing}
      ${s.link === "dots"
        ? html`<svg class="dots" viewBox="0 0 14 96" aria-hidden="true">
            ${[9, 39, 69, 99].map((y) => svg`<circle cx="7.5" cy=${y} r="6"/>`)}
          </svg>`
        : nothing}
    </li>`;
  }
}
